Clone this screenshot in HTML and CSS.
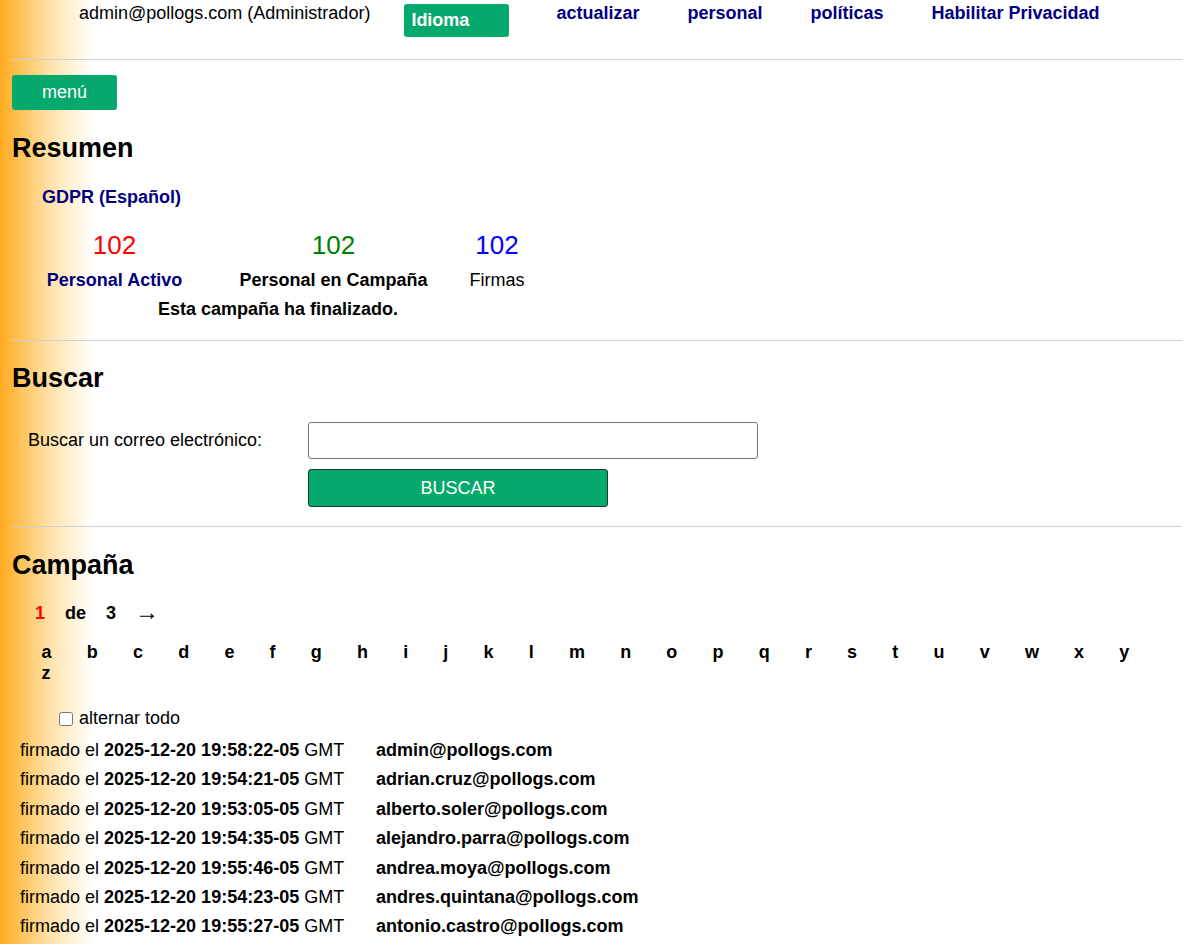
FILE: index.html
```html
<!DOCTYPE html>
<html lang="es">
<head>
    <meta charset="UTF-8">
    <meta name="viewport" content="width=device-width, initial-scale=1.0">
    <title>Resumen de campaña</title>
    <link rel="stylesheet" href="styles.css">
</head>
<body>

    <div class="topbar">
        <span class="user">admin@pollogs.com (Administrador)</span>
        <button class="btn lang">Idioma</button>
        <a class="navlink" href="#">actualizar</a>
        <a class="navlink" href="#">personal</a>
        <a class="navlink" href="#">políticas</a>
        <a class="navlink" href="#">Habilitar Privacidad</a>
    </div>
    <hr class="sep">

    <button class="btn menu">menú</button>

    <!-- Resumen -->
    <h2 class="title first">Resumen</h2>
    <a class="policy" href="#">GDPR (Español)</a>

    <div class="stats">
        <div class="num red">102</div>
        <div class="num green">102</div>
        <div class="num blue">102</div>
        <a class="label navy" href="#">Personal Activo</a>
        <div class="label">Personal en Campaña</div>
        <div class="label plain">Firmas</div>
        <div class="ended">Esta campaña ha finalizado.</div>
    </div>
    <hr class="sep section">

    <!-- Buscar -->
    <h2 class="title">Buscar</h2>
    <form class="search" onsubmit="return false">
        <label for="email">Buscar un correo electrónico:</label>
        <input type="text" id="email">
        <span></span>
        <button class="btn go">BUSCAR</button>
    </form>
    <hr class="sep section2">

    <!-- Campaña -->
    <h2 class="title campaign">Campaña</h2>
    <div class="pager">
        <span class="current">1</span>
        <span>de</span>
        <span>3</span>
        <a class="arrow" href="#">→</a>
    </div>

    <div class="letters">
        <a href="#">a</a><a href="#">b</a><a href="#">c</a><a href="#">d</a><a href="#">e</a><a href="#">f</a><a href="#">g</a><a href="#">h</a><a href="#">i</a><a href="#">j</a><a href="#">k</a><a href="#">l</a><a href="#">m</a><a href="#">n</a><a href="#">o</a><a href="#">p</a><a href="#">q</a><a href="#">r</a><a href="#">s</a><a href="#">t</a><a href="#">u</a><a href="#">v</a><a href="#">w</a><a href="#">x</a><a href="#">y</a><a href="#">z</a>
    </div>

    <label class="toggle"><input type="checkbox"> alternar todo</label>

    <div class="signed">
        <div class="row"><span>firmado el <b>2025-12-20 19:58:22-05</b> GMT</span><b>admin@pollogs.com</b></div>
        <div class="row"><span>firmado el <b>2025-12-20 19:54:21-05</b> GMT</span><b>adrian.cruz@pollogs.com</b></div>
        <div class="row"><span>firmado el <b>2025-12-20 19:53:05-05</b> GMT</span><b>alberto.soler@pollogs.com</b></div>
        <div class="row"><span>firmado el <b>2025-12-20 19:54:35-05</b> GMT</span><b>alejandro.parra@pollogs.com</b></div>
        <div class="row"><span>firmado el <b>2025-12-20 19:55:46-05</b> GMT</span><b>andrea.moya@pollogs.com</b></div>
        <div class="row"><span>firmado el <b>2025-12-20 19:54:23-05</b> GMT</span><b>andres.quintana@pollogs.com</b></div>
        <div class="row"><span>firmado el <b>2025-12-20 19:55:27-05</b> GMT</span><b>antonio.castro@pollogs.com</b></div>
    </div>

</body>
</html>
```

FILE: styles.css
```css
* {
    box-sizing: border-box;
}

body {
    margin: 0;
    padding: 0 15px 40px 12px;
    font-family: "Liberation Sans", Arial, sans-serif;
    font-size: 18px;
    line-height: 21px;
    color: #000;
    background: linear-gradient(to right, #ffab22 0px, #ffc257 20px, #ffe2ab 50px, #ffffff 92px);
}

a {
    text-decoration: none;
}

/* Top bar */
.topbar {
    display: flex;
    align-items: flex-start;
    height: 59px;
    padding-left: 67px;
}

.user {
    margin-top: 3px;
}

.navlink {
    margin-left: 47px;
    margin-top: 3px;
    color: #000080;
    font-weight: bold;
}

.navlink + .navlink {
    margin-left: 48px;
}

.btn {
    font-family: inherit;
    font-size: 18px;
    color: #fff;
    background: #05a96b;
    border: 0;
    border-radius: 3px;
    cursor: pointer;
}

.lang {
    margin-top: 4px;
    margin-left: 34px;
    width: 105px;
    height: 33px;
    padding: 0 7px;
    text-align: left;
    font-weight: bold;
}

.sep {
    margin: 0;
    border: 0;
    border-top: 1px solid #cfcfcf;
}

.menu {
    display: block;
    margin-top: 15px;
    width: 105px;
    height: 35px;
}

/* Section titles */
.title {
    margin: 22px 0 0;
    font-size: 27px;
    line-height: 31px;
}

.title.first {
    margin-top: 23px;
}

.title.campaign {
    margin-top: 23px;
}

.policy {
    display: block;
    margin-top: 23px;
    padding-left: 30px;
    color: #000080;
    font-weight: bold;
}

/* Stats */
.stats {
    display: grid;
    grid-template-columns: 185px 253px 74px;
    width: 512px;
    margin: 22px 0 0 10px;
    text-align: center;
}

.num {
    font-size: 26px;
    line-height: 30px;
}

.red { color: #f00; }
.green { color: #008000; }
.blue { color: #00f; }

.label {
    margin-top: 10px;
    font-weight: bold;
    white-space: nowrap;
}

.label.navy {
    color: #000080;
}

.label.plain {
    font-weight: normal;
}

.ended {
    grid-column: 1 / 4;
    margin-top: 8px;
    font-weight: bold;
}

.sep.section {
    margin-top: 20px;
}

/* Search */
.search {
    display: grid;
    grid-template-columns: 280px 450px;
    align-items: center;
    row-gap: 10px;
    margin-top: 28px;
    padding-left: 16px;
}

.search input {
    height: 37px;
    border: 1px solid #767676;
    border-radius: 3px;
    font-size: 18px;
    font-family: inherit;
}

.go {
    width: 300px;
    height: 38px;
    border: 1px solid #1f3a2c;
}

.sep.section2 {
    margin-top: 19px;
}

/* Campaign */
.pager {
    display: flex;
    height: 21px;
    align-items: center;
    margin-top: 22px;
    padding-left: 13px;
    font-weight: bold;
}

.pager span,
.pager a {
    padding: 0 10px;
}

.pager .current {
    color: #f00;
}

.pager .arrow {
    margin-bottom: 4px;
    padding-left: 9px;
    color: #000;
    font-weight: normal;
    font-size: 24px;
    line-height: 21px;
}

.letters {
    display: flex;
    flex-wrap: wrap;
    width: 1150px;
    margin-top: 18px;
    padding-left: 12px;
    font-weight: bold;
}

.letters a {
    padding: 0 17.6px;
    color: #000;
}

.toggle {
    display: flex;
    align-items: center;
    gap: 6px;
    margin-top: 24px;
    padding-left: 47px;
}

.toggle input {
    width: 14px;
    height: 14px;
    margin: 0;
}

.signed {
    margin-top: 7px;
    padding-left: 8px;
}

.row {
    display: grid;
    grid-template-columns: 356px auto;
    padding: 4px 0;
    line-height: 21.4px;
}
```
